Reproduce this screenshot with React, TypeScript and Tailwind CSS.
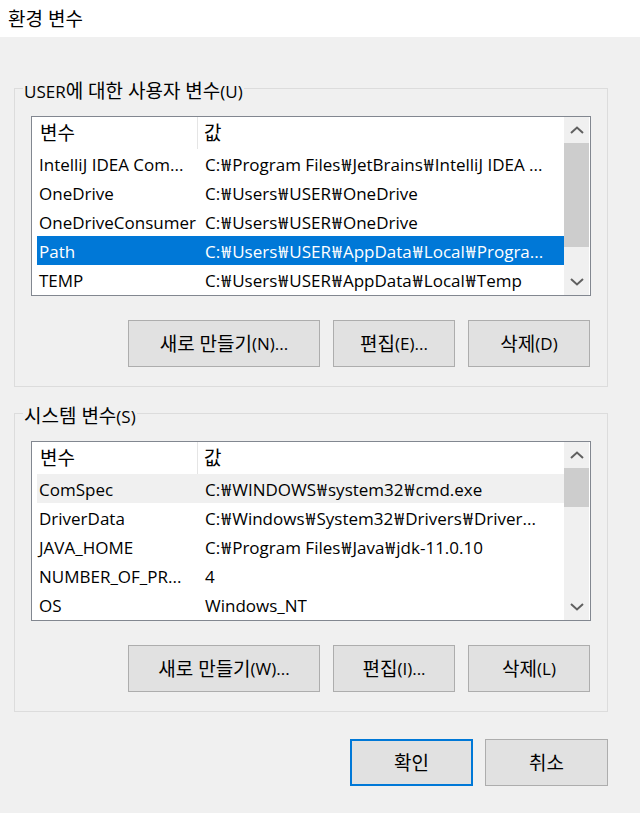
import React from "react";

const FONT = { fontFamily: '"Open Sans", "Noto Sans CJK KR", sans-serif' };

function T({ s }: { s: string }) {
  const parts = s.split(/([\uAC00-\uD7A3]+(?: [\uAC00-\uD7A3]+)*|₩)/);
  return (
    <>
      {parts.map((p, i) => {
        if (!p) return null;
        if (p === "₩")
          return (
            <span key={i} className="inline-block w-[12px] text-center">
              ₩
            </span>
          );
        if (/[\uAC00-\uD7A3]/.test(p))
          return (
            <span key={i} className="text-[19px]">
              {p}
            </span>
          );
        return <span key={i}>{p}</span>;
      })}
    </>
  );
}

type Row = { name: string; value: string; selected?: boolean; hover?: boolean };

const userRows: Row[] = [
  { name: "IntelliJ IDEA Com...", value: "C:₩Program Files₩JetBrains₩IntelliJ IDEA ..." },
  { name: "OneDrive", value: "C:₩Users₩USER₩OneDrive" },
  { name: "OneDriveConsumer", value: "C:₩Users₩USER₩OneDrive" },
  { name: "Path", value: "C:₩Users₩USER₩AppData₩Local₩Progra...", selected: true },
  { name: "TEMP", value: "C:₩Users₩USER₩AppData₩Local₩Temp" },
];

const sysRows: Row[] = [
  { name: "ComSpec", value: "C:₩WINDOWS₩system32₩cmd.exe", hover: true },
  { name: "DriverData", value: "C:₩Windows₩System32₩Drivers₩Driver..." },
  { name: "JAVA_HOME", value: "C:₩Program Files₩Java₩jdk-11.0.10" },
  { name: "NUMBER_OF_PR...", value: "4" },
  { name: "OS", value: "Windows_NT" },
];

function Chevron({ up }: { up?: boolean }) {
  return (
    <svg width="14" height="8" viewBox="0 0 14 8">
      <path
        d={up ? "M1 7 L7 1.5 L13 7" : "M1 1 L7 6.5 L13 1"}
        fill="none"
        stroke="#606060"
        strokeWidth="2"
      />
    </svg>
  );
}

function ListBox({ rows, thumbH }: { rows: Row[]; thumbH: number }) {
  return (
    <div className="ml-[16px] w-[560px] h-[180px] border border-[#828790] bg-white flex">
      <div className="flex-1 flex flex-col min-w-0">
        <div className="h-[32px] flex items-center">
          <div className="w-[166px] h-full pl-[8px] pt-[1px] flex items-center border-r border-[#e5e5e5]">
            <T s="변수" />
          </div>
          <div className="pl-[6px] pt-[1px] flex items-center h-full">
            <T s="값" />
          </div>
        </div>
        {rows.map((r) => (
          <div
            key={r.name}
            className={
              "ml-[5px] h-[29px] pt-[2px] flex items-center whitespace-nowrap " +
              (r.selected ? "bg-[#0078d7] text-white" : r.hover ? "bg-[#f0f0f0]" : "")
            }
          >
            <div className="w-[166px] pl-[2px] overflow-hidden">
              <T s={r.name} />
            </div>
            <div className="pl-[2px] overflow-hidden">
              <T s={r.value} />
            </div>
          </div>
        ))}
      </div>
      <div className="w-[25px] mr-[1px] bg-[#f0f0f0] flex flex-col">
        <div className="h-[26px] flex items-center justify-center">
          <Chevron up />
        </div>
        <div className="flex-1 flex flex-col">
          <div className="bg-[#cdcdcd]" style={{ height: thumbH }} />
        </div>
        <div className="h-[26px] flex items-center justify-center">
          <Chevron />
        </div>
      </div>
    </div>
  );
}

function Btn({ s, w, focus }: { s: string; w: string; focus?: boolean }) {
  return (
    <div
      className={
        "h-[47px] pt-[1px] bg-[#e1e1e1] flex items-center justify-center whitespace-nowrap " +
        w +
        " " +
        (focus ? "border-2 border-[#0078d7]" : "border border-[#adadad]")
      }
    >
      <T s={s} />
    </div>
  );
}

function Group({
  label,
  rows,
  thumbH,
  btns,
}: {
  label: string;
  rows: Row[];
  thumbH: number;
  btns: [string, string, string];
}) {
  return (
    <fieldset className="mx-[14px] w-[594px] border border-[#dcdcdc] pb-[19px]">
      <legend className="ml-[8px] px-[1px] leading-[24px] pt-[3px]">
        <span className="relative top-[2px]">
          <T s={label} />
        </span>
      </legend>
      <div className="mt-[14px]">
        <ListBox rows={rows} thumbH={thumbH} />
      </div>
      <div className="mt-[24px] flex justify-end gap-[13px] mr-[17px]">
        <Btn w="w-[192px]" s={btns[0]} />
        <Btn w="w-[122px]" s={btns[1]} />
        <Btn w="w-[122px]" s={btns[2]} />
      </div>
    </fieldset>
  );
}

export default function App() {
  return (
    <div className="w-[640px] h-[813px] bg-[#f0f0f0] text-[17px] text-black flex flex-col" style={FONT}>
      <div className="h-[37px] bg-white flex items-center pl-[8px] pt-[1px]">
        <T s="환경 변수" />
      </div>
      <div className="mt-[37px]">
        <Group
          label="USER에 대한 사용자 변수(U)"
          rows={userRows}
          thumbH={104}
          btns={["새로 만들기(N)...", "편집(E)...", "삭제(D)"]}
        />
      </div>
      <div className="mt-[12px]">
        <Group
          label="시스템 변수(S)"
          rows={sysRows}
          thumbH={39}
          btns={["새로 만들기(W)...", "편집(I)...", "삭제(L)"]}
        />
      </div>
      <div className="mt-[27px] flex justify-end gap-[12px] mr-[32px]">
        <Btn w="w-[123px]" focus s="확인" />
        <Btn w="w-[123px]" s="취소" />
      </div>
    </div>
  );
}
